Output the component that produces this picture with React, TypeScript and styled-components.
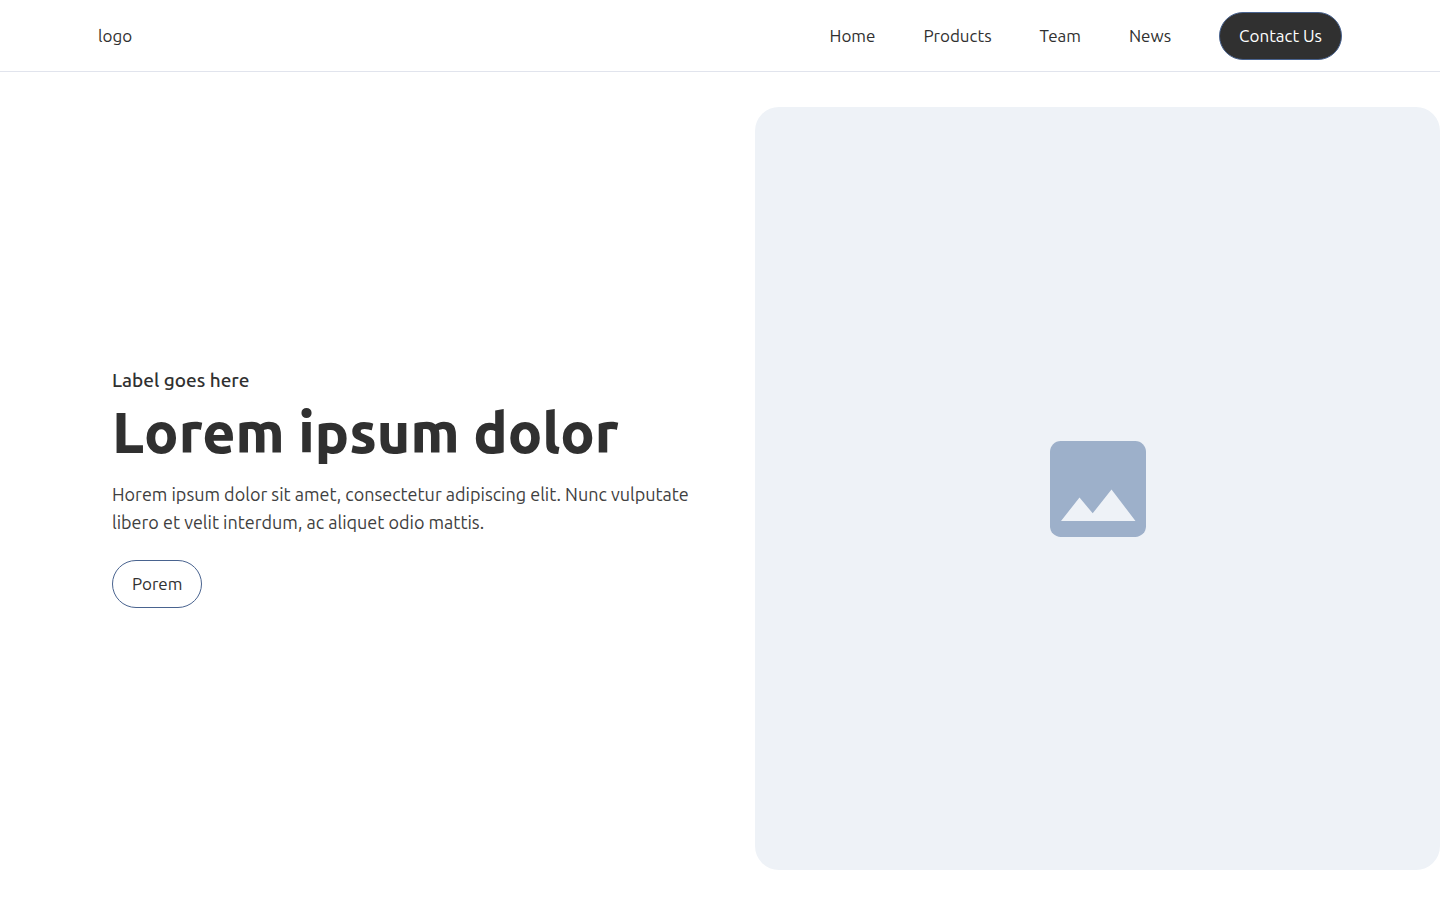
import React from "react";
import styled, { createGlobalStyle } from "styled-components";

const GlobalStyle = createGlobalStyle`
  *, *::before, *::after {
    box-sizing: border-box;
  }

  body {
    margin: 0;
    background: #fff;
    color: #303030;
    font-family: Ubuntu, "Noto Sans", sans-serif;
    font-size: 17px;
    line-height: 24px;
  }
`;

const Page = styled.div`
  display: flex;
  flex-direction: column;
  min-height: 100vh;
`;

const Header = styled.header`
  display: flex;
  align-items: center;
  justify-content: space-between;
  padding: 12px 98px 11px;
  border-bottom: 1px solid #e1e4ed;
`;

const Logo = styled.a`
  color: inherit;
  text-decoration: none;
`;

const Nav = styled.nav`
  display: flex;
  align-items: center;
  gap: 48px;
`;

const NavLink = styled.a`
  color: inherit;
  text-decoration: none;
`;

const PillButton = styled.button<{ $filled?: boolean }>`
  height: 48px;
  padding: 0 19px;
  border: 1px solid #49638f;
  border-radius: 24px;
  background: ${({ $filled }) => ($filled ? "#303030" : "#fff")};
  color: ${({ $filled }) => ($filled ? "#fff" : "#303030")};
  font: inherit;
  white-space: nowrap;
  cursor: pointer;
`;

const Hero = styled.main`
  display: grid;
  grid-template-columns: minmax(0, 643fr) minmax(0, 685fr);
  flex: 1;
  padding: 35px 0 35px 112px;
`;

const Copy = styled.section`
  display: flex;
  flex-direction: column;
  align-items: flex-start;
  justify-content: center;
  padding: 0 48px 2px 0;
`;

const Eyebrow = styled.p`
  margin: 0;
  font-size: 19px;
  font-weight: 500;
  line-height: 24px;
`;

const Title = styled.h1`
  margin: 8px 0 16px;
  font-size: 57px;
  font-weight: 800;
  line-height: 64px;
`;

const Body = styled.p`
  margin: 0 0 24px;
  color: #404040;
  font-size: 18px;
  line-height: 28px;
`;

const Picture = styled.div`
  display: flex;
  align-items: center;
  justify-content: center;
  border-radius: 24px;
  background: #eef2f7;
`;

const links = ["Home", "Products", "Team", "News"];

function ImageIcon() {
  return (
    <svg width="96" height="96" viewBox="0 0 96 96" role="img" aria-label="Image placeholder">
      <rect width="96" height="96" rx="10.7" fill="#9db0ca" />
      <path d="M11 80 29.5 56.5 42.7 72.3 61.5 48.5 85.5 80Z" fill="#eef2f7" />
    </svg>
  );
}

export default function App() {
  return (
    <>
      <GlobalStyle />
      <Page>
        <Header>
          <Logo href="#">logo</Logo>
          <Nav>
            {links.map((label) => (
              <NavLink key={label} href={`#${label.toLowerCase()}`}>
                {label}
              </NavLink>
            ))}
            <PillButton type="button" $filled>
              Contact Us
            </PillButton>
          </Nav>
        </Header>
        <Hero>
          <Copy>
            <Eyebrow>Label goes here</Eyebrow>
            <Title>Lorem ipsum dolor</Title>
            <Body>
              Horem ipsum dolor sit amet, consectetur adipiscing elit. Nunc vulputate libero et
              velit interdum, ac aliquet odio mattis.
            </Body>
            <PillButton type="button">Porem</PillButton>
          </Copy>
          <Picture>
            <ImageIcon />
          </Picture>
        </Hero>
      </Page>
    </>
  );
}
